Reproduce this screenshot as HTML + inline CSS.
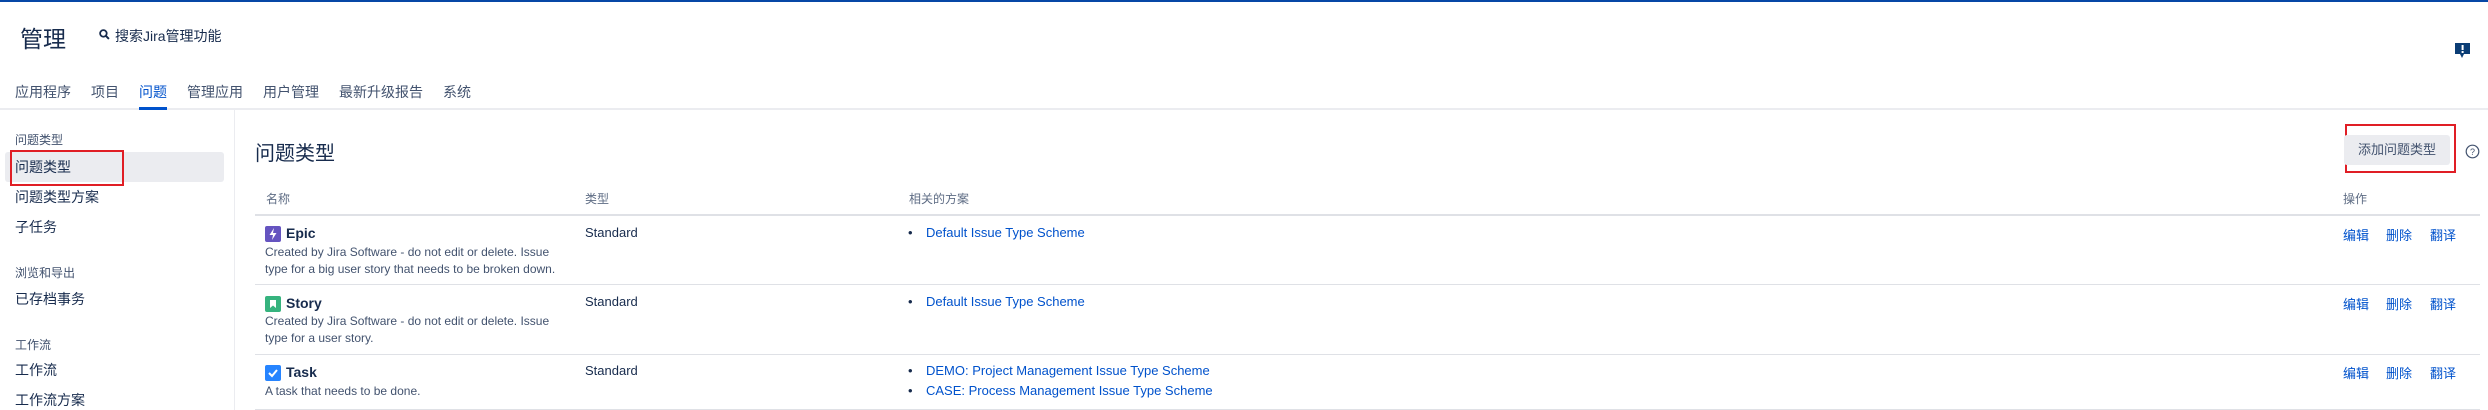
<!DOCTYPE html>
<html><head><meta charset="utf-8"><style>
*{margin:0;padding:0;box-sizing:border-box}
body{width:2488px;height:410px;overflow:hidden;background:#fff;font-family:"Liberation Sans","Noto Sans CJK SC",sans-serif;color:#172b4d;position:relative}
.a{position:absolute;white-space:nowrap}
.lk{color:#0052cc}
.g{color:#5e6c84}
.desc{font-size:12px;color:#42526e;line-height:17px}
.nav{position:absolute;top:82px;font-size:14px;color:#42526e}
.si{position:absolute;left:15px;font-size:14px;color:#172b4d;line-height:18px}
.sh{position:absolute;left:15px;font-size:12px;color:#42526e;line-height:16px}
</style></head><body>
<div class="a" style="left:0;top:0;width:2488px;height:2px;background:#0747a6"></div>
<div class="a" style="left:20px;top:20px;font-size:23px;color:#172b4d">管理</div>
<svg class="a" style="left:99px;top:29px" width="11" height="11" viewBox="0 0 10 10"><circle cx="4" cy="4" r="3" fill="none" stroke="#172b4d" stroke-width="1.6"/><path d="M6 6l3 3" stroke="#172b4d" stroke-width="1.8"/></svg>
<div class="a" style="left:115px;top:26px;font-size:14px">搜索Jira管理功能</div>
<svg class="a" style="left:2454px;top:42px" width="17" height="18" viewBox="0 0 17 18"><path d="M1 1h15v11H10l-2 4-2-4H1z" fill="#0b3d75"/><rect x="7.6" y="3" width="2" height="5" fill="#fff"/><rect x="7.6" y="9" width="2" height="2" fill="#fff"/></svg>
<span class="nav" style="left:15px">应用程序</span><span class="nav" style="left:91px">项目</span><span class="nav" style="left:139px;color:#0052cc">问题</span><span class="nav" style="left:187px">管理应用</span><span class="nav" style="left:263px">用户管理</span><span class="nav" style="left:339px">最新升级报告</span><span class="nav" style="left:443px">系统</span>
<div class="a" style="left:0;top:108px;width:2488px;height:2px;background:#ebecf0"></div>
<div class="a" style="left:139px;top:107px;width:28px;height:3px;background:#0052cc"></div>
<div class="a" style="left:234px;top:110px;width:1px;height:300px;background:#ebecf0"></div>
<div class="a" style="left:5px;top:152px;width:219px;height:30px;background:#ebecf0;border-radius:3px"></div>
<div class="a" style="left:10px;top:150px;width:114px;height:36px;border:2px solid #e01e25"></div>
<span class="sh" style="top:132px">问题类型</span>
<span class="si" style="top:158px">问题类型</span>
<span class="si" style="top:188px">问题类型方案</span>
<span class="si" style="top:218px">子任务</span>
<span class="sh" style="top:265px">浏览和导出</span>
<span class="si" style="top:290px">已存档事务</span>
<span class="sh" style="top:337px">工作流</span>
<span class="si" style="top:361px">工作流</span>
<span class="si" style="top:391px">工作流方案</span>
<div class="a" style="left:255px;top:137px;font-size:20px">问题类型</div>
<div class="a" style="left:2345px;top:124px;width:111px;height:49px;border:2px solid #e01e25"></div>
<div class="a" style="left:2344px;top:135px;width:106px;height:30px;background:#ebecf0;border-radius:3px;font-size:13px;color:#42526e;text-align:center;line-height:30px">添加问题类型</div>
<svg class="a" style="left:2465px;top:144px" width="15" height="15" viewBox="0 0 15 15"><circle cx="7.5" cy="7.5" r="6.3" fill="none" stroke="#42526e" stroke-width="1.2"/><text x="7.5" y="11" font-size="9" text-anchor="middle" fill="#42526e" font-family="Liberation Sans">?</text></svg>
<div class="a g" style="left:266px;top:190px;font-size:12px">名称</div>
<div class="a g" style="left:585px;top:190px;font-size:12px">类型</div>
<div class="a g" style="left:909px;top:190px;font-size:12px">相关的方案</div>
<div class="a g" style="left:2343px;top:190px;font-size:12px">操作</div>
<div class="a" style="left:255px;top:214px;width:2225px;height:2px;background:#dfe1e6"></div>
<div class="a" style="left:255px;top:284px;width:2225px;height:1px;background:#dfe1e6"></div>
<div class="a" style="left:255px;top:354px;width:2225px;height:1px;background:#dfe1e6"></div>
<div class="a" style="left:255px;top:409px;width:2225px;height:1px;background:#dfe1e6"></div>
<svg class="a" style="left:265px;top:226px" width="16" height="16" viewBox="0 0 16 16"><rect width="16" height="16" rx="2" fill="#6554c0"/><path d="M9 2L4.5 9H8l-1 5 4.5-7H8z" fill="#fff"/></svg>
<div class="a" style="left:286px;top:225px;font-size:14px;font-weight:bold">Epic</div>
<div class="a desc" style="left:265px;top:244px">Created by Jira Software - do not edit or delete. Issue<br>type for a big user story that needs to be broken down.</div>
<svg class="a" style="left:265px;top:296px" width="16" height="16" viewBox="0 0 16 16"><rect width="16" height="16" rx="2" fill="#36b37e"/><path d="M5 4h6v8l-3-2.5L5 12z" fill="#fff"/></svg>
<div class="a" style="left:286px;top:295px;font-size:14px;font-weight:bold">Story</div>
<div class="a desc" style="left:265px;top:313px">Created by Jira Software - do not edit or delete. Issue<br>type for a user story.</div>
<svg class="a" style="left:265px;top:365px" width="16" height="16" viewBox="0 0 16 16"><rect width="16" height="16" rx="2" fill="#2684ff"/><path d="M4 8l3 3 5-6" fill="none" stroke="#fff" stroke-width="2"/></svg>
<div class="a" style="left:286px;top:364px;font-size:14px;font-weight:bold">Task</div>
<div class="a desc" style="left:265px;top:383px">A task that needs to be done.</div>
<div class="a" style="left:585px;top:225px;font-size:13px">Standard</div>
<div class="a" style="left:585px;top:294px;font-size:13px">Standard</div>
<div class="a" style="left:585px;top:363px;font-size:13px">Standard</div>
<div class="a" style="left:908px;top:225px;font-size:13px">•</div><div class="a lk" style="left:926px;top:225px;font-size:13px">Default Issue Type Scheme</div>
<div class="a" style="left:908px;top:294px;font-size:13px">•</div><div class="a lk" style="left:926px;top:294px;font-size:13px">Default Issue Type Scheme</div>
<div class="a" style="left:908px;top:363px;font-size:13px">•</div><div class="a lk" style="left:926px;top:363px;font-size:13px">DEMO: Project Management Issue Type Scheme</div>
<div class="a" style="left:908px;top:383px;font-size:13px">•</div><div class="a lk" style="left:926px;top:383px;font-size:13px">CASE: Process Management Issue Type Scheme</div>
<div class="a lk" style="left:2343px;top:225px;font-size:13px">编辑</div><div class="a lk" style="left:2386px;top:225px;font-size:13px">删除</div><div class="a lk" style="left:2430px;top:225px;font-size:13px">翻译</div>
<div class="a lk" style="left:2343px;top:294px;font-size:13px">编辑</div><div class="a lk" style="left:2386px;top:294px;font-size:13px">删除</div><div class="a lk" style="left:2430px;top:294px;font-size:13px">翻译</div>
<div class="a lk" style="left:2343px;top:363px;font-size:13px">编辑</div><div class="a lk" style="left:2386px;top:363px;font-size:13px">删除</div><div class="a lk" style="left:2430px;top:363px;font-size:13px">翻译</div>
</body></html>
